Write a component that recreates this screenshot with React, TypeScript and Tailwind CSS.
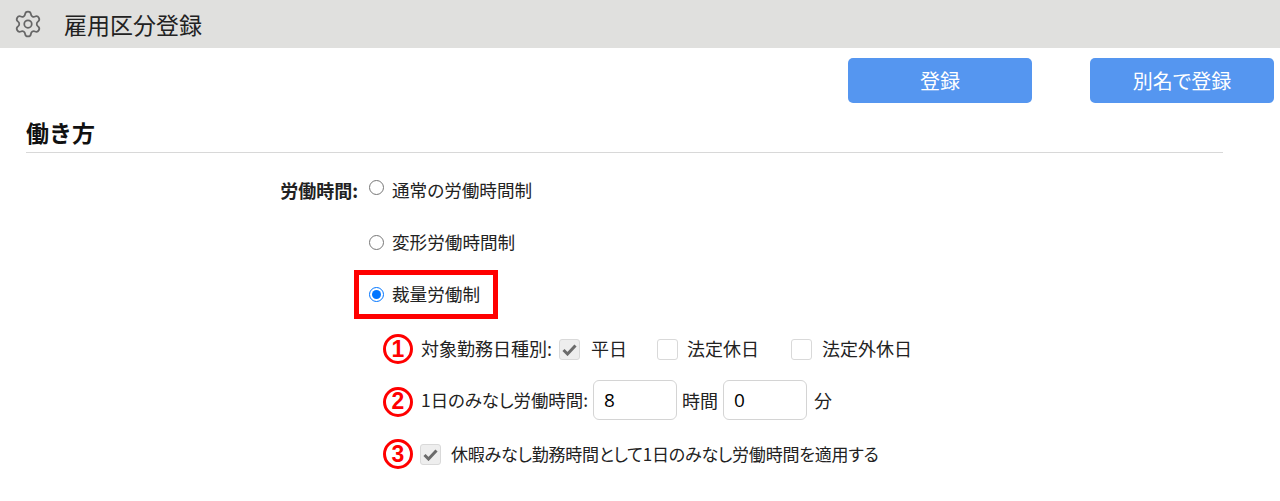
import { Settings } from "lucide-react";

const FONT = "font-['Noto_Sans_CJK_JP','Noto_Sans',sans-serif]";

const Marker = ({ n }: { n: number }) => (
  <span className="w-[30px] h-[30px] shrink-0 rounded-full border-[3px] border-[#ff0000] flex items-center justify-center text-[23px] font-bold leading-none text-[#ff0000] font-['Liberation_Sans',sans-serif]">
    {n}
  </span>
);

const Check = ({ checked = false }: { checked?: boolean }) => (
  <span
    className={`w-[21px] h-[21px] shrink-0 rounded-[3px] border border-[#d9d9d9] flex items-center justify-center ${
      checked ? "bg-[#eeeeee]" : "bg-white"
    }`}
  >
    {checked && (
      <svg width="15" height="13" viewBox="0 0 15 13">
        <path d="M1.5 7 L5.5 11 L13.5 2.5" fill="none" stroke="#6b6b6b" strokeWidth="3" />
      </svg>
    )}
  </span>
);

const Radio = ({ checked = false }: { checked?: boolean }) => (
  <input type="radio" checked={checked} readOnly className="w-[15px] h-[15px] m-0 shrink-0" />
);

const NumberBox = ({ value }: { value: string }) => (
  <span className="w-[84px] h-[40px] rounded-[6px] border border-[#d4d4d4] bg-white flex items-center pl-[10px] text-[19px] text-black font-['Open_Sans',sans-serif]">
    {value}
  </span>
);

export default function App() {
  return (
    <div className={`w-[1280px] h-[501px] overflow-hidden bg-white text-[17.6px] leading-none text-[#222222] [font-feature-settings:'palt'] ${FONT}`}>
      <header className="h-[48px] bg-[#e0e0de] flex items-center pl-[13px]">
        <Settings className="w-[30px] h-[30px] text-[#666666]" strokeWidth={1.4} />
        <h1 className="ml-[21px] text-[23px] font-normal [font-feature-settings:normal]">雇用区分登録</h1>
      </header>

      <div className="flex justify-end gap-[58px] pt-[10px] pr-[6px]">
        <button className="w-[184px] h-[45px] rounded-[5px] bg-[#5596f0] text-white text-[20px] [font-feature-settings:normal]">登録</button>
        <button className="w-[184px] h-[45px] rounded-[5px] bg-[#5596f0] text-white text-[20px]">別名で登録</button>
      </div>

      <h2 className="ml-[26px] mr-[57px] mt-[16px] h-[34px] pt-[2px] border-b border-[#d8d8d8] text-[23px] font-bold text-[#111111] [font-feature-settings:normal]">
        働き方
      </h2>

      <div className="pt-[27px]">
        <div className="flex items-center h-[20px]">
          <span className="w-[358px] text-right font-bold text-[18px]">労働時間:</span>
          <span className="ml-[11px] mb-[6px] flex"><Radio /></span>
          <span className="ml-[8px]">通常の労働時間制</span>
        </div>

        <div className="flex items-center h-[20px] mt-[32px] pl-[369px]">
          <Radio />
          <span className="ml-[8px]">変形労働時間制</span>
        </div>

        <div className="flex items-center w-[144px] h-[49px] mt-[18px] ml-[354px] pl-[10px] border-[5px] border-[#ff0000]">
          <Radio checked />
          <span className="ml-[8px] pb-[2px]">裁量労働制</span>
        </div>

        <div className="pl-[383px] mt-[15px] flex flex-col">
          <div className="flex items-center h-[30px] text-[18px]">
            <Marker n={1} />
            <span className="ml-[8px] pb-[2px]">対象勤務日種別:</span>
            <span className="ml-[7px]"><Check checked /></span>
            <span className="ml-[11px] pb-[2px]">平日</span>
            <span className="ml-[30px]"><Check /></span>
            <span className="ml-[9px] pb-[2px]">法定休日</span>
            <span className="ml-[32px]"><Check /></span>
            <span className="ml-[10px] pb-[2px]">法定外休日</span>
          </div>
          <div className="flex items-center h-[40px] mt-[16px]">
            <span className="mt-[3px]"><Marker n={2} /></span>
            <span className="ml-[8px] text-[17.4px]">1日のみなし労働時間:</span>
            <span className="ml-[5px]"><NumberBox value="8" /></span>
            <span className="ml-[5px] text-[18px]">時間</span>
            <span className="ml-[5px]"><NumberBox value="0" /></span>
            <span className="ml-[7px] text-[18px]">分</span>
          </div>
          <div className="flex items-center h-[30px] mt-[19px]">
            <Marker n={3} />
            <span className="ml-[7px]"><Check checked /></span>
            <span className="ml-[10px] pb-[2px] text-[17px] tracking-[-0.2px]">休暇みなし勤務時間として1日のみなし労働時間を適用する</span>
          </div>
        </div>
      </div>
    </div>
  );
}
